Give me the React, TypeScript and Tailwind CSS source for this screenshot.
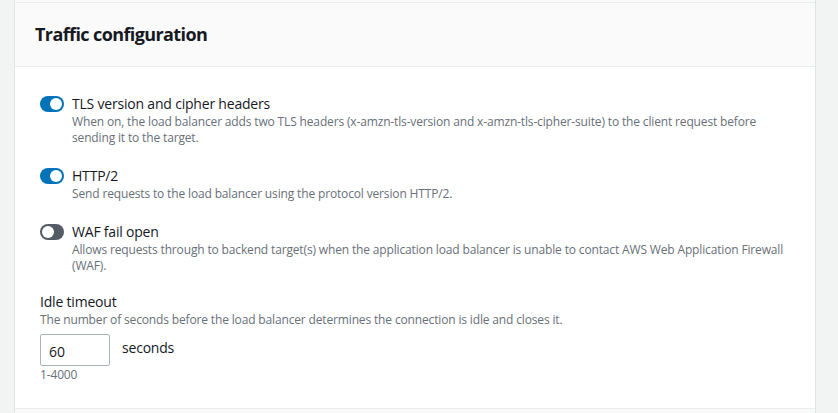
import React, { useState } from 'react';

type Option = {
  id: string;
  label: string;
  description: string;
  on: boolean;
};

const initialOptions: Option[] = [
  {
    id: 'tls',
    label: 'TLS version and cipher headers',
    description:
      'When on, the load balancer adds two TLS headers (x-amzn-tls-version and x-amzn-tls-cipher-suite) to the client request before sending it to the target.',
    on: true,
  },
  {
    id: 'http2',
    label: 'HTTP/2',
    description: 'Send requests to the load balancer using the protocol version HTTP/2.',
    on: true,
  },
  {
    id: 'waf',
    label: 'WAF fail open',
    description:
      'Allows requests through to backend target(s) when the application load balancer is unable to contact AWS Web Application Firewall (WAF).',
    on: false,
  },
];

function Toggle({ on, onClick }: { on: boolean; onClick: () => void }) {
  return (
    <button
      onClick={onClick}
      className={`relative mt-[2px] h-[16px] w-[24px] shrink-0 rounded-full ${
        on ? 'bg-[#0073bb]' : 'bg-[#545b64]'
      }`}
    >
      <span
        className={`absolute top-[2px] h-[12px] w-[12px] rounded-full bg-white ${
          on ? 'left-[10px]' : 'left-[2px]'
        }`}
      />
    </button>
  );
}

export default function App() {
  const [options, setOptions] = useState(initialOptions);
  const [timeout, setTimeoutValue] = useState('60');

  const flip = (id: string) =>
    setOptions((prev) => prev.map((o) => (o.id === id ? { ...o, on: !o.on } : o)));

  return (
    <div
      className="h-[413px] w-full overflow-hidden bg-[#f2f3f3] pl-[14px] pr-[22px]"
      style={{ fontFamily: '"Open Sans", "Noto Sans", Arial, sans-serif' }}
    >
      <div className="flex h-full flex-col border-x border-[#e0e4e4] bg-white">
        <div className="h-[3px] border-b border-[#eaeded] bg-[#fafafa]" />
        <div className="flex h-[64px] items-center border-b border-[#eaeded] bg-[#fafafa] px-[20px]">
          <h2 className="text-[18px] font-bold tracking-[-0.6px] text-[#16191f]">
            Traffic configuration
          </h2>
        </div>

        <div className="flex-1 px-[25px] pt-[27px]">
          <div className="flex flex-col gap-[20px]">
            {options.map((o) => (
              <div key={o.id} className="flex gap-[8px]">
                <Toggle on={o.on} onClick={() => flip(o.id)} />
                <div>
                  <div className="text-[14px] leading-[20px] tracking-[-0.2px] text-[#16191f]">{o.label}</div>
                  <div className="text-[12px] leading-[16px] tracking-[-0.15px] text-[#687078]">
                    {o.description}
                  </div>
                </div>
              </div>
            ))}
          </div>

          <div className="mt-[18px]">
            <div className="text-[14px] leading-[20px] tracking-[-0.2px] text-[#16191f]">Idle timeout</div>
            <div className="text-[12px] leading-[16px] tracking-[-0.15px] text-[#687078]">
              The number of seconds before the load balancer determines the connection is idle and closes it.
            </div>
            <div className="mt-[6px] flex items-start gap-[12px]">
              <input
                value={timeout}
                onChange={(e) => setTimeoutValue(e.target.value)}
                className="h-[32px] w-[70px] rounded-[2px] border border-[#aab7b8] px-[8px] pt-[2px] text-[14px] text-[#16191f] outline-none"
              />
              <span className="pt-[4px] text-[14px] leading-[20px] tracking-[-0.2px] text-[#16191f]">
                seconds
              </span>
            </div>
            <div className="mt-[1px] text-[12px] leading-[16px] tracking-[-0.15px] text-[#687078]">1-4000</div>
          </div>
        </div>

        <div className="h-[5px] border-t border-[#eaeded] bg-[#fafafa]" />
      </div>
    </div>
  );
}
